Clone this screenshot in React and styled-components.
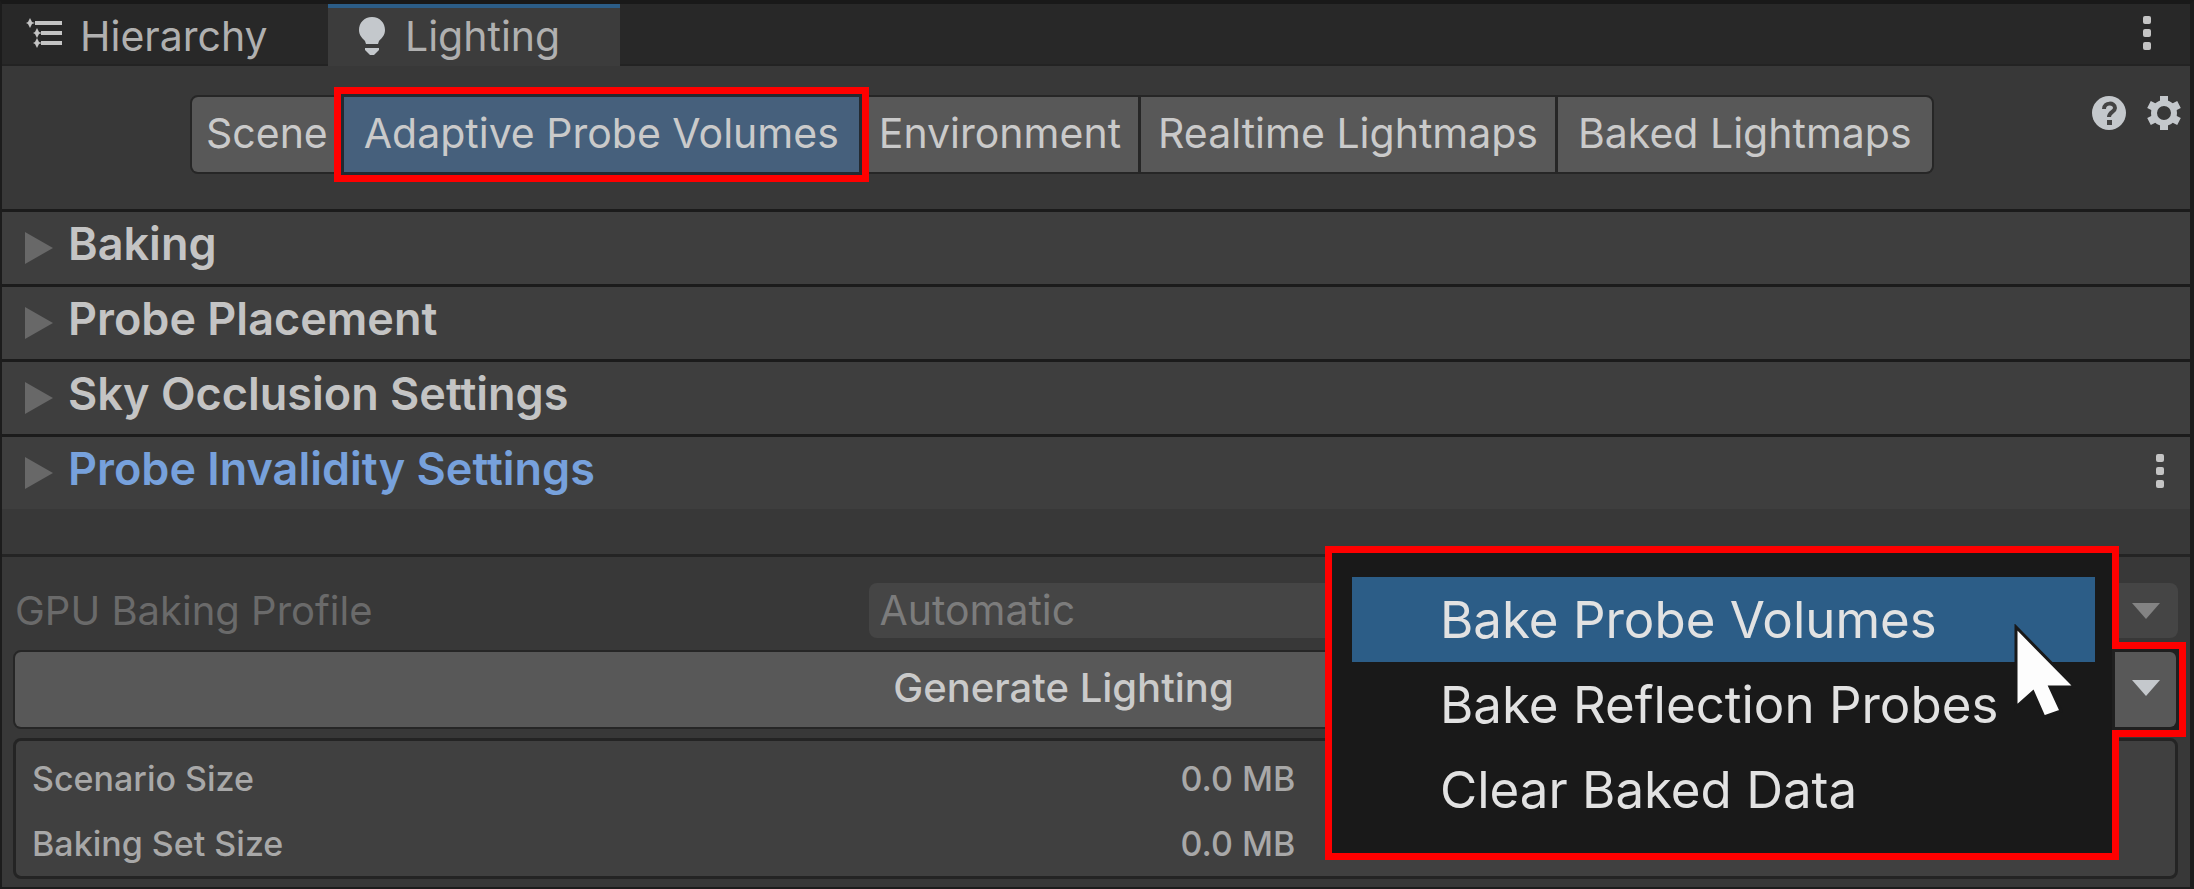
import React, { useState } from "react";
import styled, { createGlobalStyle, css } from "styled-components";

const GlobalStyle = createGlobalStyle`
  * {
    box-sizing: border-box;
  }

  body {
    margin: 0;
    background: #191919;
    font-family: Inter, "Liberation Sans", sans-serif;
    color: #c4c4c4;
  }

  button, select {
    font: inherit;
    color: inherit;
    border: none;
    background: none;
    padding: 0;
    margin: 0;
  }
`;

const Window = styled.div`
  border: 2px solid #1c1c1c;
  border-top: 4px solid #191919;
  border-right-width: 4px;
  background: #383838;
`;

const TabBar = styled.div`
  display: flex;
  align-items: stretch;
  height: 62px;
  background: #282828;
  border-bottom: 2px solid #232323;
`;

const Tab = styled.button`
  display: flex;
  align-items: center;
  gap: 18px;
  width: ${(props) => (props.$active ? 292 : 326)}px;
  padding-left: ${(props) => (props.$active ? 30 : 24)}px;
  border-top: 4px solid transparent;
  font-size: 41px;
  line-height: 48px;
  color: #b0b0b0;

  ${(props) =>
    props.$active &&
    css`
      margin-bottom: -2px;
      padding-bottom: 2px;
      border-top-color: #2c5d87;
      background: #3c3c3c;
    `}
`;

const MenuButton = styled.button`
  margin-left: auto;
  padding: 2px 38px 0;
`;

const Toolbar = styled.div`
  display: flex;
  justify-content: space-between;
  padding: 29px 8px 35px 188px;
`;

const ModeGroup = styled.div`
  display: flex;
  gap: 3px;
  border: 2px solid #262626;
  border-radius: 8px;
  background: #262626;
`;

const ModeButton = styled.button`
  position: relative;
  height: 75px;
  padding: 0 ${(props) => (props.$tight ? 17 : 20)}px 4px;
  font-size: 41px;
  line-height: 48px;
  color: #cacaca;
  background: ${(props) => (props.$active ? "#46607c" : "#585858")};

  &:first-child {
    padding: 0 13px 4px 14px;
    border-radius: 6px 0 0 6px;
  }

  &:last-child {
    border-radius: 0 6px 6px 0;
  }

  ${(props) =>
    props.$active &&
    css`
      z-index: 1;

      &::before {
        content: "";
        position: absolute;
        inset: -10px;
        border: 7px solid #ff0000;
      }

      &::after {
        content: "";
        position: absolute;
        inset: -3px;
        border: 3px solid #232a31;
      }
    `}
`;

const ToolbarIcons = styled.div`
  display: flex;
  gap: 20px;
  height: 36px;
`;

const Section = styled.section`
  display: flex;
  align-items: center;
  height: 75px;
  padding: 0 25px 0 23px;
  border-top: 3px solid #1b1b1b;
  background: #3e3e3e;
`;

const SectionToggle = styled.button`
  display: flex;
  flex: 1;
  align-items: center;
  gap: 15px;
  color: ${(props) => (props.$selected ? "#77a1dc" : "#c4c4c4")};
`;

const SectionTitle = styled.span`
  padding-bottom: 8px;
  font-size: 45px;
  font-weight: 600;
  line-height: 54px;
`;

const Footer = styled.div`
  margin-top: 45px;
  padding: 26px 12px 8px 11px;
  border-top: 3px solid #242424;
`;

const ProfileRow = styled.div`
  display: flex;
  align-items: center;
  padding: 0 0 0 2px;
  font-size: 41px;
  line-height: 48px;
`;

const ProfileLabel = styled.label`
  width: 39.5%;
  font-size: 40px;
  color: #6a6a6a;
`;

const SelectBox = styled.div`
  display: flex;
  flex: 1;
  align-items: center;
  padding-right: 18px;
  border-radius: 8px;
  background: #454545;
`;

const Select = styled.select`
  flex: 1;
  height: 55px;
  padding: 0 0 2px 10px;
  appearance: none;
  color: #7c7c7c;
  opacity: 1;
`;

const GenerateRow = styled.div`
  position: relative;
  display: flex;
  gap: 3px;
  margin: 12px 0 9px;
  border: 2px solid #262626;
  border-radius: 8px;
  background: #262626;
`;

const GenerateButton = styled.button`
  flex: 1;
  height: 75px;
  padding-bottom: 4px;
  border-radius: 6px 0 0 6px;
  font-size: 40px;
  font-weight: 500;
  color: #cacaca;
  background: #585858;
`;

const ArrowSlot = styled.div`
  position: relative;
  z-index: 2;
  display: flex;

  &::before {
    content: "";
    position: absolute;
    inset: -10px -10px -10px -3px;
    border: 7px solid #ff0000;
    border-left: none;
    background: #1f1f1f;
  }
`;

const ArrowButton = styled.button`
  position: relative;
  width: 61px;
  border-radius: 0 6px 6px 0;
  background: #585858;
`;

const BakeMenu = styled.ul`
  position: absolute;
  z-index: 1;
  top: -106px;
  right: 57px;
  width: 794px;
  margin: 0;
  padding: 24px 17px 21px 20px;
  border: 7px solid #ff0000;
  background: #191919;
  list-style: none;
`;

const BakeItem = styled.button`
  display: block;
  width: 100%;
  height: 85px;
  padding-left: 88px;
  font-size: 51px;
  line-height: 85px;
  text-align: left;
  color: #e2e2e2;
  background: ${(props) => (props.$hover ? "#2c5d87" : "transparent")};
`;

const Cursor = styled.svg`
  position: absolute;
  top: 71px;
  right: 36px;
`;

const SizeTable = styled.table`
  width: 100%;
  padding: 5px 16px 0;
  border: 3px solid #242424;
  border-radius: 8px;
  border-spacing: 0;
  background: #404040;
  font-size: 34px;
  line-height: 65px;
  color: #a8a8a8;

  th {
    width: 54%;
    padding: 0;
    font-weight: 500;
    text-align: left;
  }

  td {
    padding: 0;
    font-weight: 500;
  }
`;

const modes = [
  { name: "Scene" },
  { name: "Adaptive Probe Volumes" },
  { name: "Environment", tight: true },
  { name: "Realtime Lightmaps", tight: true },
  { name: "Baked Lightmaps" },
];

const sections = [
  "Baking",
  "Probe Placement",
  "Sky Occlusion Settings",
  "Probe Invalidity Settings",
];

const bakeActions = ["Bake Probe Volumes", "Bake Reflection Probes", "Clear Baked Data"];

const sizes = [
  ["Scenario Size", "0.0 MB"],
  ["Baking Set Size", "0.0 MB"],
];

const HierarchyIcon = () => (
  <svg width="36" height="38" viewBox="0 0 36 38" fill="#c4c4c4">
    <path d="M9 4h27v4H9zM15 14h21v4H15zM15 24h21v4H15z" />
    <path d="M4 1l2 4 3 1-3 1-2 4-2-4-2-1 2-1zM11 11l2 4 3 1-3 1-2 4-2-4-2-1 2-1zM11 21l2 4 3 1-3 1-2 4-2-4-2-1 2-1z" />
  </svg>
);

const BulbIcon = () => (
  <svg width="29" height="40" viewBox="0 0 29 40" fill="#c4c8cc">
    <path d="M14 1C6 1 1 7 1 14c0 5 3 8 6 11l1 3h12l1-3c3-3 6-6 6-11C27 7 22 1 14 1z" />
    <path d="M7 32h14v2l-5 5h-4l-5-5z" />
  </svg>
);

const KebabIcon = () => (
  <svg width="9" height="38" viewBox="0 0 9 38" fill="#c4c4c4">
    <rect y="2" width="8" height="8" rx="2" />
    <rect y="15" width="8" height="8" rx="2" />
    <rect y="28" width="8" height="8" rx="2" />
  </svg>
);

const HelpIcon = () => (
  <svg width="34" height="36" viewBox="0 0 34 36">
    <circle cx="17" cy="18" r="17" fill="#c4c8cc" />
    <path d="M12 14c0-7 11-7 11-1 0 4-6 4-6 9" fill="none" stroke="#444444" strokeWidth="4" />
    <rect x="15" y="25" width="5" height="5" fill="#444444" />
  </svg>
);

const GearIcon = () => (
  <svg width="36" height="36" viewBox="0 0 36 36" fill="none" stroke="#c4c8cc">
    <circle cx="18" cy="18" r="10" strokeWidth="6" />
    <path
      d="M18 1v6M18 29v6M3 9.500l6 3M27 23.500l6 3M3 26.500l6-3M27 12.500l6-3"
      strokeWidth="8"
    />
  </svg>
);

const Foldout = () => (
  <svg width="28" height="34" viewBox="0 0 28 34">
    <path d="M0 1l28 16L0 33z" fill="#686868" />
  </svg>
);

const DownArrow = ({ color }) => (
  <svg width="28" height="16" viewBox="0 0 28 16">
    <path d="M0 0h28L14 16z" fill={color} />
  </svg>
);

function App() {
  const [mode, setMode] = useState("Adaptive Probe Volumes");
  const [hovered, setHovered] = useState(bakeActions[0]);

  return (
    <Window>
      <GlobalStyle />
      <TabBar>
        <Tab>
          <HierarchyIcon />
          Hierarchy
        </Tab>
        <Tab $active>
          <BulbIcon />
          Lighting
        </Tab>
        <MenuButton aria-label="Window menu">
          <KebabIcon />
        </MenuButton>
      </TabBar>
      <Toolbar>
        <ModeGroup>
          {modes.map(({ name, tight }) => (
            <ModeButton
              key={name}
              $tight={tight}
              $active={name === mode}
              onClick={() => setMode(name)}
            >
              {name}
            </ModeButton>
          ))}
        </ModeGroup>
        <ToolbarIcons>
          <button aria-label="Help">
            <HelpIcon />
          </button>
          <button aria-label="Settings">
            <GearIcon />
          </button>
        </ToolbarIcons>
      </Toolbar>
      {sections.map((name, index) => (
        <Section key={name}>
          <SectionToggle $selected={index === 3}>
            <Foldout />
            <SectionTitle>{name}</SectionTitle>
          </SectionToggle>
          {index === 3 && (
            <button aria-label="Section menu">
              <KebabIcon />
            </button>
          )}
        </Section>
      ))}
      <Footer>
        <ProfileRow>
          <ProfileLabel htmlFor="profile">GPU Baking Profile</ProfileLabel>
          <SelectBox>
            <Select id="profile" disabled>
              <option>Automatic</option>
            </Select>
            <DownArrow color="#838383" />
          </SelectBox>
        </ProfileRow>
        <GenerateRow>
          <GenerateButton>Generate Lighting</GenerateButton>
          <ArrowSlot>
            <ArrowButton aria-label="Bake options">
              <DownArrow color="#c4c8cc" />
            </ArrowButton>
          </ArrowSlot>
          <BakeMenu>
            {bakeActions.map((name) => (
              <li key={name}>
                <BakeItem $hover={name === hovered} onMouseEnter={() => setHovered(name)}>
                  {name}
                </BakeItem>
              </li>
            ))}
            <Cursor width="64" height="94" viewBox="0 0 64 94">
              <path
                d="M4 3v80l17-15 11 25 17-6-11-24h25z"
                fill="#fdfdfd"
                stroke="#191919"
                strokeWidth="3"
              />
            </Cursor>
          </BakeMenu>
        </GenerateRow>
        <SizeTable>
          <tbody>
            {sizes.map(([label, value]) => (
              <tr key={label}>
                <th scope="row">{label}</th>
                <td>{value}</td>
              </tr>
            ))}
          </tbody>
        </SizeTable>
      </Footer>
    </Window>
  );
}

export default App;
